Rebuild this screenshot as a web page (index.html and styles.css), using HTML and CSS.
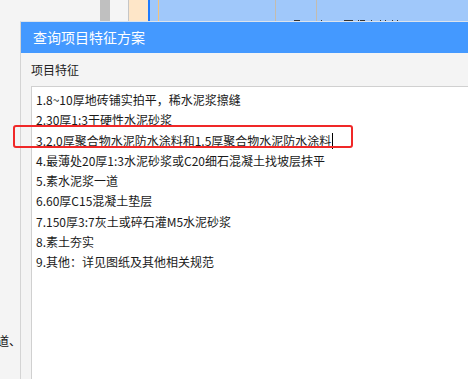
FILE: index.html
```html
<!DOCTYPE html>
<html>
<head>
    <title>查询项目特征方案</title>
    <meta charset="UTF-8">
    <link rel="stylesheet" href="styles.css">
</head>
<body class="page">
    <div class="grid-strip">
        <div class="cell cell-blank"></div>
        <div class="cell cell-scroll"></div>
        <div class="cell cell-light"></div>
        <div class="cell cell-peach"></div>
        <div class="cell cell-select"></div>
        <div class="cell cell-row">
            <div class="col col-a"></div>
            <div class="col col-b">
                <span class="mark" style="margin-left:18px;width:6px"></span>
            </div>
            <div class="col col-c">
                <span class="mark" style="margin-left:4px;width:1px"></span>
                <span class="mark" style="margin-left:22px;width:9px"></span>
                <span class="mark" style="margin-left:5px;width:1px"></span>
                <span class="mark" style="margin-left:1px;width:5px"></span>
                <span class="mark" style="margin-left:6px;width:1px"></span>
                <span class="mark" style="margin-left:8px;width:1px"></span>
                <span class="mark" style="margin-left:4px;width:1px"></span>
                <span class="mark" style="margin-left:6px;width:1px"></span>
                <span class="mark" style="margin-left:4px;width:1px"></span>
            </div>
        </div>
    </div>

    <div class="main">
        <div class="gutter">
            <span class="gutter-text">道、</span>
        </div>

        <div class="dialog">
            <div class="dialog-title">查询项目特征方案</div>
            <div class="dialog-body">
                <div class="field-label">项目特征</div>
                <div class="feature-box">
                    <div class="feature-line">1.8~10厚地砖铺实拍平，稀水泥浆擦缝</div>
                    <div class="feature-line">2.30厚1:3干硬性水泥砂浆</div>
                    <div class="feature-line">3.2.0厚聚合物水泥防水涂料和1.5厚聚合物水泥防水涂料<span class="caret"></span></div>
                    <div class="feature-line">4.最薄处20厚1:3水泥砂浆或C20细石混凝土找坡层抹平</div>
                    <div class="feature-line">5.素水泥浆一道</div>
                    <div class="feature-line">6.60厚C15混凝土垫层</div>
                    <div class="feature-line">7.150厚3:7灰土或碎石灌M5水泥砂浆</div>
                    <div class="feature-line">8.素土夯实</div>
                    <div class="feature-line">9.其他：详见图纸及其他相关规范</div>
                </div>
            </div>
        </div>
    </div>

    <div class="highlight"></div>
</body>
</html>
```

FILE: styles.css
```css
.page{
margin: 0;
width: 468px;
height: 379px;
overflow: hidden;
background: #f4f4f4;
font-family: "Noto Sans CJK SC", "Microsoft YaHei", sans-serif;
color: #1a1a1a;
}

/* table behind the dialog */
.grid-strip{
display: flex;
height: 21px;
}

.cell{
height: 100%;
}

.cell-blank{
width: 100px;
}

.cell-scroll{
width: 10px;
background: #c0c0c0;
}

.cell-light{
width: 18px;
background: #f5f5f5;
border-right: 1px solid #c6c6c6;
}

.cell-peach{
width: 19px;
background: #fee6c8;
}

.cell-select{
width: 8px;
background: #a0c8fa;
border-left: 2px solid #1e7bff;
border-right: 1px solid #f5c27a;
}

.cell-row{
flex: 1;
display: flex;
background: #a0c8fa;
}

.col{
height: 100%;
display: flex;
align-items: flex-end;
}

.col-a{
width: 116px;
border-right: 1px solid #c4bcae;
}

.col-b{
width: 40px;
border-right: 1px solid #c4bcae;
}

.col-c{
flex: 1;
}

.mark{
display: block;
height: 1px;
background: #333;
}

.main{
display: flex;
height: 358px;
overflow: hidden;
}

.gutter{
width: 20px;
display: flex;
align-items: flex-start;
justify-content: flex-end;
padding-top: 313px;
box-sizing: border-box;
overflow: hidden;
}

.gutter-text{
font-size: 12px;
line-height: 14px;
white-space: nowrap;
margin-right: -1px;
color: #111;
}

.dialog{
flex: 1;
border-left: 1px solid #d4d4d4;
border-top: 1px solid #dde4ec;
background: #f4f4f4;
overflow: hidden;
}

.dialog-title{
height: 31px;
background: #4499ff;
color: #fff;
font-size: 14px;
line-height: 31px;
padding-left: 12px;
}

.dialog-body{
padding: 8px 0 0 10px;
}

.field-label{
font-size: 12px;
line-height: 18px;
color: #222;
}

.feature-box{
margin-top: 7px;
height: 293px;
box-sizing: border-box;
background: #fff;
border-top: 1px solid #d0d0d0;
border-left: 1px solid #d0d0d0;
padding: 3px 0 0 4px;
}

.feature-line{
font-size: 12px;
line-height: 20.25px;
white-space: nowrap;
color: #1a1a1a;
}

.caret{
display: inline-block;
width: 1px;
height: 16px;
background: #000;
vertical-align: -3px;
margin-left: 1px;
}

.highlight{
position: absolute;
left: 13px;
top: 125px;
width: 336px;
height: 19px;
border: 2px solid #f02828;
border-radius: 3px;
}
```
